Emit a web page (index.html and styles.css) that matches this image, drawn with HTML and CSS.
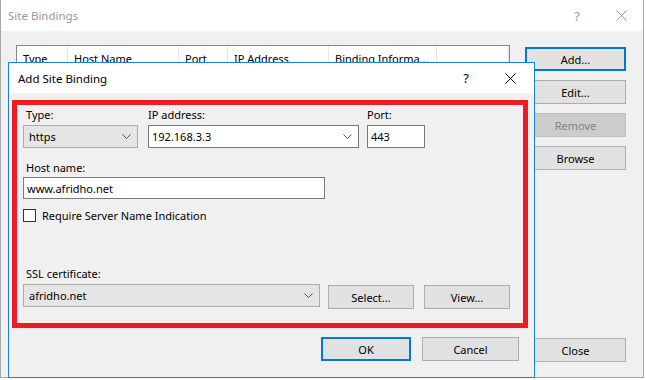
FILE: index.html
```html
<!DOCTYPE html>
<html lang="en">
<head>
    <meta charset="UTF-8">
    <meta name="viewport" content="width=device-width, initial-scale=1.0">
    <title>Site Bindings</title>
    <link rel="stylesheet" href="styles.css">
</head>
<body>
    <div class="window back">
        <div class="titlebar">
            <span class="title">Site Bindings</span>
            <span class="help">?</span>
            <svg class="close" width="11" height="11" viewBox="0 0 11 11"><path d="M0.5 0.5 L10.5 10.5 M10.5 0.5 L0.5 10.5" /></svg>
        </div>
        <div class="content">
            <div class="list">
                <div class="list-head">
                    <span class="col col-type">Type</span>
                    <span class="col col-host">Host Name</span>
                    <span class="col col-port">Port</span>
                    <span class="col col-ip">IP Address</span>
                    <span class="col col-info">Binding Informa...</span>
                    <span class="col col-rest"></span>
                </div>
            </div>
            <div class="side">
                <button class="btn focused">Add...</button>
                <button class="btn">Edit...</button>
                <button class="btn disabled">Remove</button>
                <button class="btn">Browse</button>
                <button class="btn btn-close">Close</button>
            </div>
        </div>
    </div>

    <div class="window dialog">
        <div class="titlebar">
            <span class="title">Add Site Binding</span>
            <span class="help">?</span>
            <svg class="close" width="11" height="11" viewBox="0 0 11 11"><path d="M0.5 0.5 L10.5 10.5 M10.5 0.5 L0.5 10.5" /></svg>
        </div>
        <div class="dialog-body">
            <div class="highlight">
                <div class="row-top">
                    <div class="field f-type">
                        <label>Type:</label>
                        <div class="combo">
                            <span>https</span>
                            <svg class="chev" width="9" height="5" viewBox="0 0 9 5"><path d="M0.5 0.5 L4.5 4.5 L8.5 0.5" /></svg>
                        </div>
                    </div>
                    <div class="field f-ip">
                        <label>IP address:</label>
                        <div class="combo edit">
                            <span>192.168.3.3</span>
                            <svg class="chev" width="9" height="5" viewBox="0 0 9 5"><path d="M0.5 0.5 L4.5 4.5 L8.5 0.5" /></svg>
                        </div>
                    </div>
                    <div class="field f-port">
                        <label>Port:</label>
                        <div class="textbox">443</div>
                    </div>
                </div>

                <label class="lbl-host">Host name:</label>
                <div class="textbox host">www.afridho.net</div>

                <div class="check-row">
                    <span class="checkbox"></span>
                    <span>Require Server Name Indication</span>
                </div>

                <label class="lbl-ssl">SSL certificate:</label>
                <div class="ssl-row">
                    <div class="combo ssl">
                        <span>afridho.net</span>
                        <svg class="chev" width="9" height="5" viewBox="0 0 9 5"><path d="M0.5 0.5 L4.5 4.5 L8.5 0.5" /></svg>
                    </div>
                    <button class="btn btn-select">Select...</button>
                    <button class="btn btn-view">View...</button>
                </div>
            </div>
            <div class="dialog-buttons">
                <button class="btn focused btn-ok">OK</button>
                <button class="btn btn-cancel">Cancel</button>
            </div>
        </div>
    </div>
</body>
</html>
```

FILE: styles.css
```css
body {
    margin: 0;
    width: 646px;
    height: 380px;
    background: #ffffff;
    font-family: "Noto Sans", "Open Sans", sans-serif;
    font-size: 11px;
    color: #000000;
    position: relative;
    overflow: hidden;
}
.window {
    box-sizing: border-box;
    background: #f0f0f0;
}
.titlebar {
    display: flex;
    align-items: center;
    background: #ffffff;
}
.titlebar .title {
    flex: 1;
    font-size: 11.5px;
}
.titlebar .close path {
    stroke-width: 1;
    fill: none;
}

/* back window */
.back {
    width: 644px;
    height: 378px;
    border: 1px solid #a8a8a8;
    border-top: none;
    display: flex;
    flex-direction: column;
}
.back .titlebar {
    height: 31px;
    padding-left: 7px;
    color: #999999;
}
.back .help {
    margin-right: 36px;
    font-size: 13px;
}
.back .close {
    margin-right: 16px;
}
.back .close path {
    stroke: #999999;
}
.content {
    flex: 1;
    display: flex;
    padding: 14px 15px 15px 15px;
    gap: 15px;
}
.list {
    width: 494px;
    height: 300px;
    background: #ffffff;
    border: 1px solid #828790;
    box-sizing: border-box;
}
.list-head {
    display: flex;
    height: 24px;
}
.col {
    box-sizing: border-box;
    border-right: 1px solid #e5e5e5;
    padding: 5px 0 0 6px;
    white-space: nowrap;
}
.col-type { width: 51px; }
.col-host { width: 111px; }
.col-port { width: 49px; }
.col-ip { width: 101px; }
.col-info { width: 108px; }
.col-rest { flex: 1; }
.side {
    width: 101px;
    display: flex;
    flex-direction: column;
    gap: 9px;
    padding-top: 2px;
}
.side .btn {
    height: 24px;
}
.side .btn-close {
    margin-top: auto;
}

/* buttons */
.btn {
    box-sizing: border-box;
    font-family: inherit;
    font-size: 11px;
    color: #000000;
    background: #e1e1e1;
    border: 1px solid #adadad;
    padding: 0;
    margin: 0;
}
.btn.focused {
    border: 2px solid #0078d7;
}
.btn.disabled {
    background: #cccccc;
    border-color: #bfbfbf;
    color: #838383;
}

/* front dialog */
.dialog {
    position: absolute;
    left: 8px;
    top: 62px;
    width: 527px;
    height: 316px;
    border: 1px solid #1883d7;
}
.dialog .titlebar {
    height: 30px;
    padding-left: 9px;
}
.dialog .help {
    font-size: 13px;
    margin-right: 36px;
}
.dialog .close {
    margin-right: 18px;
}
.dialog .close path {
    stroke: #000000;
}
.dialog-body {
    padding: 7px 6px 0 3px;
}
.highlight {
    height: 228px;
    box-sizing: border-box;
    border: 5px solid #ed1c24;
    padding: 2px 0 0 6px;
}
label {
    display: block;
    height: 16px;
    line-height: 16px;
    padding-left: 3px;
}
.row-top {
    display: flex;
}
.field label {
    margin-bottom: 2px;
}
.f-type { width: 115px; margin-right: 10px; }
.f-ip { width: 211px; margin-right: 8px; }
.f-port { width: 58px; }
.f-ip label,
.f-port label {
    padding-left: 0;
}
.combo,
.textbox {
    box-sizing: border-box;
    height: 23px;
    display: flex;
    align-items: center;
    padding-left: 5px;
}
.combo {
    background: #e5e5e5;
    border: 1px solid #adadad;
}
.combo span {
    flex: 1;
}
.combo .chev {
    margin-right: 6px;
}
.chev path {
    stroke: #555555;
    fill: none;
}
.combo.edit {
    background: #ffffff;
    border-color: #7a7a7a;
    padding-left: 3px;
}
.textbox {
    background: #ffffff;
    border: 1px solid #7a7a7a;
    padding-left: 3px;
}
.lbl-host {
    margin-top: 12px;
    margin-bottom: 1px;
}
.textbox.host {
    width: 302px;
    height: 22px;
}
.check-row {
    display: flex;
    align-items: center;
    gap: 6px;
    margin-top: 10px;
    height: 13px;
}
.checkbox {
    box-sizing: border-box;
    width: 13px;
    height: 13px;
    background: #ffffff;
    border: 1px solid #333333;
}
.lbl-ssl {
    margin-top: 44px;
    margin-bottom: 2px;
}
.ssl-row {
    display: flex;
    align-items: flex-start;
}
.combo.ssl {
    width: 297px;
}
.btn-select {
    width: 86px;
    height: 24px;
    margin: 1px 0 0 8px;
}
.btn-view {
    width: 86px;
    height: 24px;
    margin: 1px 0 0 10px;
}
.dialog-buttons {
    display: flex;
    justify-content: flex-end;
    gap: 11px;
    margin-top: 9px;
    padding-right: 9px;
}
.btn-ok {
    width: 90px;
    height: 24px;
}
.btn-cancel {
    width: 97px;
    height: 24px;
}
```
